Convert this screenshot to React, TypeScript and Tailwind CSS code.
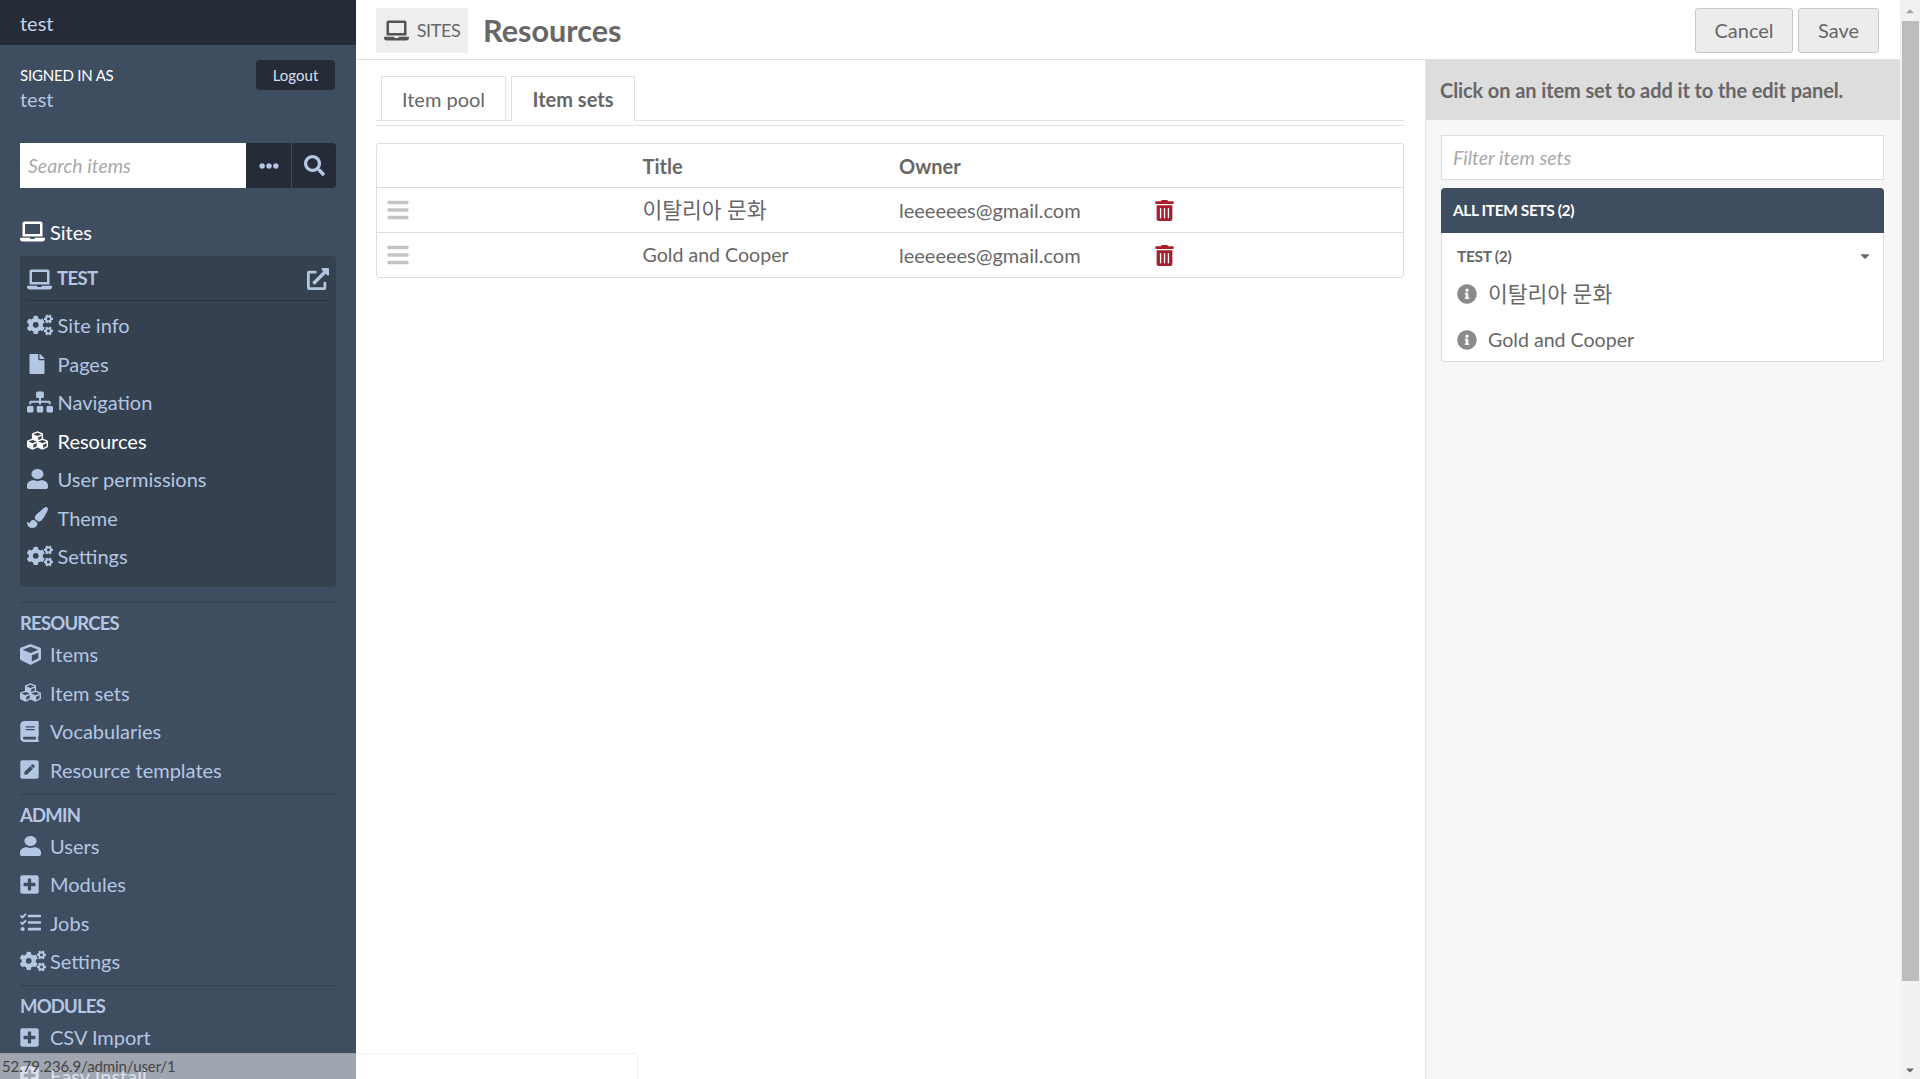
import React from "react"
import { IconType } from "react-icons"
import {
  FaBars,
  FaBook,
  FaCaretDown,
  FaCaretUp,
  FaCogs,
  FaCube,
  FaCubes,
  FaEllipsisH,
  FaExternalLinkAlt,
  FaFile,
  FaInfoCircle,
  FaLaptop,
  FaPaintBrush,
  FaPenSquare,
  FaPlusSquare,
  FaSearch,
  FaSitemap,
  FaTasks,
  FaTrashAlt,
  FaUser,
} from "react-icons/fa"

const FONT = "font-['Lato','Noto_Sans_CJK_KR',sans-serif]"

type NavItem = { label: string; icon: IconType; size?: string; active?: boolean }

const USER_ICON = "h-[20px] w-[21px]"
const SQUARE_ICON = "text-[21px] [&>svg]:-ml-px"

const siteLinks: NavItem[] = [
  { label: "Site info", icon: FaCogs, size: "text-[26px]" },
  { label: "Pages", icon: FaFile, size: "text-[20px]" },
  { label: "Navigation", icon: FaSitemap, size: "text-[26px]" },
  { label: "Resources", icon: FaCubes, size: "text-[21px]", active: true },
  { label: "User permissions", icon: FaUser, size: USER_ICON },
  { label: "Theme", icon: FaPaintBrush, size: "text-[21px]" },
  { label: "Settings", icon: FaCogs, size: "text-[26px]" },
]

const sections: { title: string; links: NavItem[] }[] = [
  {
    title: "RESOURCES",
    links: [
      { label: "Items", icon: FaCube, size: "text-[21px]" },
      { label: "Item sets", icon: FaCubes, size: "text-[21px]" },
      { label: "Vocabularies", icon: FaBook, size: SQUARE_ICON },
      { label: "Resource templates", icon: FaPenSquare, size: SQUARE_ICON },
    ],
  },
  {
    title: "ADMIN",
    links: [
      { label: "Users", icon: FaUser, size: USER_ICON },
      { label: "Modules", icon: FaPlusSquare, size: SQUARE_ICON },
      { label: "Jobs", icon: FaTasks, size: "text-[21px]" },
      { label: "Settings", icon: FaCogs, size: "text-[26px]" },
    ],
  },
  {
    title: "MODULES",
    links: [
      { label: "CSV Import", icon: FaPlusSquare, size: SQUARE_ICON },
      { label: "Easy Install", icon: FaPlusSquare, size: SQUARE_ICON },
    ],
  },
]

const rows = [
  { title: "이탈리아 문화", owner: "leeeeees@gmail.com", korean: true },
  { title: "Gold and Cooper", owner: "leeeeees@gmail.com", korean: false },
]

const NavRow = ({ item, iconWidth }: { item: NavItem; iconWidth: string }) => {
  const Icon = item.icon
  const stretched = item.size === USER_ICON
  return (
    <a className={`flex h-[38.5px] items-center text-[20px] ${item.active ? "text-white" : "text-[#b3c6e2]"}`}>
      <span className={`flex shrink-0 items-center ${iconWidth} ${stretched ? "" : item.size ?? ""}`}>
        {stretched ? <Icon className={USER_ICON} preserveAspectRatio="none" /> : <Icon />}
      </span>
      {item.label}
    </a>
  )
}

const Sidebar = () => (
  <aside className="relative h-full w-[356px] shrink-0 overflow-hidden bg-[#3f4d60]">
    <div className="flex h-[45px] items-center bg-[#252c38] px-5 text-[20px] text-[#c3d4ec]">test</div>
    <div className="flex items-start justify-between pl-5 pr-[21px] pt-[15px]">
      <div>
        <div className="text-[15px] leading-[30px] tracking-[-0.2px] text-white">SIGNED IN AS</div>
        <div className="text-[20px] leading-[18px] text-[#b3c6e2]">test</div>
      </div>
      <button className="h-[30px] w-[79px] rounded-[4px] bg-[#252c38] text-[15px] text-[#d5e0f0]">Logout</button>
    </div>
    <div className="mt-[35px] flex h-[45px] pl-5 pr-5">
      <div className="flex w-[226px] items-center bg-white px-[8px] text-[19.5px] italic text-[#a9a9a9]">Search items</div>
      <button className="flex w-[45px] items-center justify-center bg-[#252c38] text-[20px] text-[#b3c6e2]">
        <FaEllipsisH />
      </button>
      <button className="ml-px flex w-[44px] items-center justify-center rounded-r-[4px] bg-[#252c38] text-[21px] text-[#b3c6e2]">
        <FaSearch />
      </button>
    </div>
    <div className="mt-[25px] flex h-[37px] items-center px-5 text-[20px] text-white">
      <FaLaptop className="mr-[5px] text-[25px]" />
      Sites
    </div>
    <div className="mx-5 mt-[6px] h-[331px] rounded-[4px] bg-[#364150] px-[7px]">
      <div className="flex h-[45px] items-center justify-between border-b border-[#2c3542] pt-[2px] text-[18.5px] font-bold tracking-[-0.6px] text-[#b3c6e2]">
        <span className="flex items-center">
          <FaLaptop className="mr-[5px] text-[25px]" />
          TEST
        </span>
        <FaExternalLinkAlt className="text-[22px]" />
      </div>
      <div className="pt-[5px]">
        {siteLinks.map((l) => (
          <NavRow key={l.label} item={l} iconWidth="w-[30.5px]" />
        ))}
      </div>
    </div>
    <div className="px-5">
      {sections.map((s, i) => (
        <div key={s.title} className={`border-t border-[#364150] ${i === 0 ? "mt-[15px]" : "mt-[4.5px]"}`}>
          <div className="h-[27px] pt-[5px] text-[18.5px] font-bold leading-[30px] tracking-[-0.8px] text-[#b3c6e2]">{s.title}</div>
          <div className="pt-[5px]">
            {s.links.map((l) => (
              <NavRow key={l.label} item={l} iconWidth="w-[30px]" />
            ))}
          </div>
        </div>
      ))}
    </div>
  </aside>
)

const Tab = ({ label, active }: { label: string; active?: boolean }) => (
  <div
    className={`flex h-[45px] items-center justify-center border border-[#e2e2e2] text-[20px] ${active ? "w-[124px] border-b-white font-bold" : "ml-px w-[125px]"} text-[#676767]`}
  >
    {label}
  </div>
)

const Table = () => (
  <div className="mt-[17px] rounded-[3px] border border-[#dedede] text-[20px] text-[#676767]">
    <div className="grid h-[43px] grid-cols-4 items-center font-bold">
      <div />
      <div className="pl-[9px]">Title</div>
      <div className="pl-[9px]">Owner</div>
      <div />
    </div>
    {rows.map((r) => (
      <div key={r.title} className="grid h-[45px] grid-cols-4 items-center border-t border-[#dedede]">
        <div className="pl-[9px] text-[24px] text-[#c4c4c4]">
          <FaBars />
        </div>
        <div className={`pl-[9px] ${r.korean ? "text-[21.5px]" : "text-[19.6px]"}`}>{r.title}</div>
        <div className="pl-[9px]">{r.owner}</div>
        <div className="pl-[7px] text-[21px] text-[#a91e2c]">
          <FaTrashAlt />
        </div>
      </div>
    ))}
  </div>
)

const RightPanel = () => (
  <div className="h-full w-[475px] shrink-0 border-l border-[#e6e6e6] bg-[#f7f7f7]">
    <div className="flex h-[60px] items-center bg-[#dddddd] pl-[14px] text-[20px] font-bold tracking-[-0.1px] text-[#676767]">
      Click on an item set to add it to the edit panel.
    </div>
    <div className="pl-[15px] pr-4 pt-[15px]">
      <div className="flex h-[45px] items-center border border-[#dedede] bg-white pl-[11px] text-[19.5px] italic text-[#a9a9a9]">Filter item sets</div>
      <div className="mt-2 flex h-[45px] items-center rounded-t-[4px] bg-[#3f4d60] pl-3 text-[15.5px] font-bold tracking-[-0.4px] text-white">
        ALL ITEM SETS (2)
      </div>
      <div className="h-[129px] rounded-b-[4px] border border-t-0 border-[#dedede] bg-white pl-[15px] pr-[11px] text-[#676767]">
        <div className="flex h-[47px] items-center justify-between text-[15.5px] font-bold tracking-[-0.3px]">
          TEST (2)
          <FaCaretDown className="mb-[2px] text-[14px]" />
        </div>
        <div className="-mt-[9px]">
          {rows.map((r) => (
            <div key={r.title} className={`flex h-[46px] items-center ${r.korean ? "text-[21.5px]" : "text-[19.6px]"}`}>
              <FaInfoCircle className="mr-[11px] text-[20px] text-[#8a8a8a]" />
              {r.title}
            </div>
          ))}
        </div>
      </div>
    </div>
  </div>
)

const Scrollbar = () => (
  <div className="flex h-full w-5 shrink-0 flex-col items-center bg-[#f1f1f1] text-[#6a6a6a]">
    <div className="flex h-[21px] items-center justify-center text-[12px] text-[#a3a3a3]">
      <FaCaretUp />
    </div>
    <div className="h-[960px] w-[17px] bg-[#bdbdbd]" />
    <div className="flex flex-1 items-end justify-center pb-[3px] text-[12px]">
      <FaCaretDown />
    </div>
  </div>
)

export default function App() {
  return (
    <div className={`${FONT} relative flex h-screen w-full overflow-hidden bg-white`}>
      <Sidebar />
      <main className="flex h-full min-w-0 flex-1 flex-col">
        <header className="flex h-[60px] shrink-0 items-center justify-between border-b border-[#e2e2e2] pl-5 pr-[21px] pt-[2px] text-[#676767]">
          <div className="flex items-center">
            <div className="flex h-[45px] w-[92px] items-center justify-center bg-[#eeeeee] text-[18px] tracking-[-0.4px]">
              <FaLaptop className="mr-2 text-[25px] text-[#555555]" />
              SITES
            </div>
            <h1 className="ml-[15px] text-[30.6px] font-bold">Resources</h1>
          </div>
          <div className="flex gap-[5px] text-[20px]">
            <button className="h-[45px] w-[98px] rounded-[3px] border border-[#c9c9c9] bg-[#ececec] pb-[2px]">Cancel</button>
            <button className="h-[45px] w-[81px] rounded-[3px] border border-[#c9c9c9] bg-[#ececec] pb-[2px]">Save</button>
          </div>
        </header>
        <div className="flex min-h-0 flex-1">
          <section className="min-w-0 flex-1 pl-5 pr-[21px] pt-4">
            <div className="flex gap-[5px] pl-1">
              <Tab label="Item pool" />
              <Tab label="Item sets" active />
            </div>
            <div className="-mt-px border-y border-[#e2e2e2] pt-[4px]" />
            <Table />
          </section>
          <RightPanel />
        </div>
      </main>
      <Scrollbar />
      <div className="absolute bottom-0 left-0 flex h-[26px] w-[638px] items-center rounded-tr-[4px] border-t border-r border-black/5 bg-white/50 pl-[2px] text-[15px] tracking-[-0.1px] text-[#444]">
        52.79.236.9/admin/user/1
      </div>
    </div>
  )
}
